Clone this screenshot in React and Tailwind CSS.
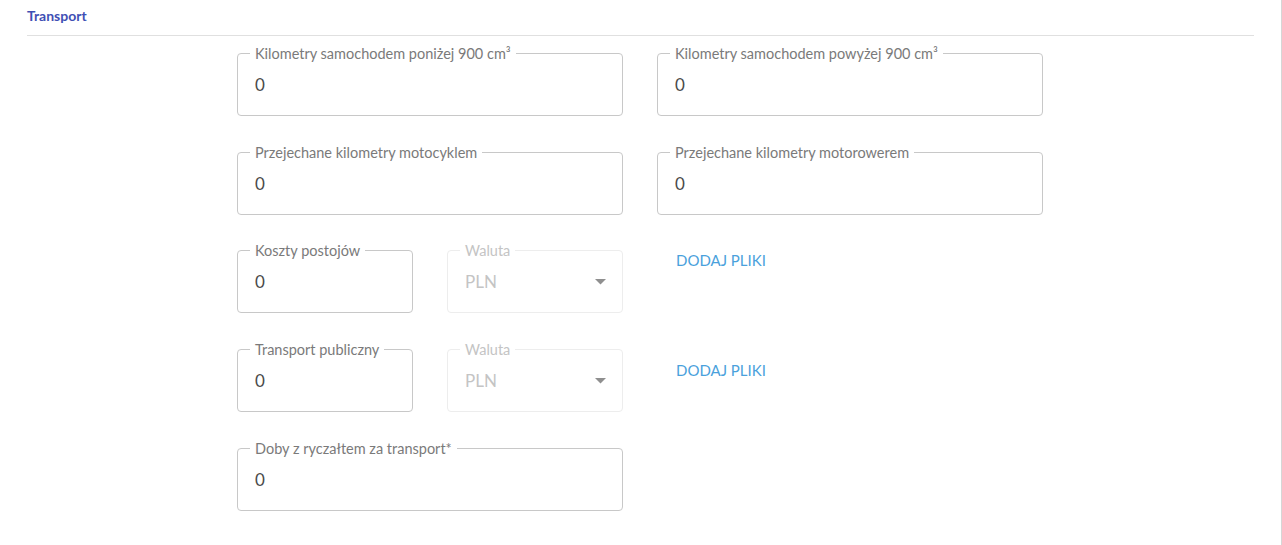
import React from 'react';

const font = { fontFamily: 'Lato, "Open Sans", sans-serif' };

const TextField = ({ label, value = '0', width = 'w-[386px]' }) => (
    <div className={`relative h-[63px] ${width} shrink-0 rounded-[4px] border border-[#c8c8c8] bg-white`}>
        <span className="absolute left-[12px] top-[-9px] bg-white px-[5px] text-[14.5px] leading-[17px] whitespace-nowrap text-[#7a7a7a]">
            {label}
        </span>
        <input
            readOnly
            value={value}
            className="h-full w-full bg-transparent px-[17px] text-[17px] text-[#4a4a4a] outline-none"
        />
    </div>
);

const CurrencyField = () => (
    <div className="relative h-[63px] w-[176px] shrink-0 rounded-[4px] border border-[#ededed] bg-white">
        <span className="absolute left-[12px] top-[-9px] bg-white px-[5px] text-[14.5px] leading-[17px] text-[#c4c4c4]">
            Waluta
        </span>
        <div className="flex h-full items-center justify-between pl-[17px] pr-[16px]">
            <span className="text-[17px] text-[#c4c4c4]">PLN</span>
            <svg width="11" height="6" viewBox="0 0 11 6">
                <path d="M0 0 L11 0 L5.5 5.5 Z" fill="#8f8f8f" />
            </svg>
        </div>
    </div>
);

const AddFiles = ({ offset }) => (
    <button type="button" className={`${offset} ml-[19px] self-start text-[15px] leading-[18px] uppercase text-[#4aa1dc]`}>
        Dodaj pliki
    </button>
);

const App = () => (
    <div style={font} className="min-h-[545px] w-full border-r border-[#d6d6d6] bg-white px-[27px]">
        <div className="border-b border-[#e0e0e0] pt-[6px] pb-[9px]">
            <h2 className="text-[14px] leading-[20px] font-bold text-[#3f4fb4]">Transport</h2>
        </div>

        <div className="ml-[210px] flex w-[806px] flex-col gap-[36px] pt-[17px]">
            <div className="flex gap-[34px]">
                <TextField label="Kilometry samochodem poniżej 900 cm³" />
                <TextField label="Kilometry samochodem powyżej 900 cm³" />
            </div>
            <div className="flex gap-[34px]">
                <TextField label="Przejechane kilometry motocyklem" />
                <TextField label="Przejechane kilometry motorowerem" />
            </div>
            <div className="-mt-[1px] flex gap-[34px]">
                <TextField label="Koszty postojów" width="w-[176px]" />
                <CurrencyField />
                <AddFiles offset="mt-[1px]" />
            </div>
            <div className="flex gap-[34px]">
                <TextField label="Transport publiczny" width="w-[176px]" />
                <CurrencyField />
                <AddFiles offset="mt-[12px]" />
            </div>
            <div className="flex gap-[34px]">
                <TextField label="Doby z ryczałtem za transport*" />
            </div>
        </div>
    </div>
);

export default App;
